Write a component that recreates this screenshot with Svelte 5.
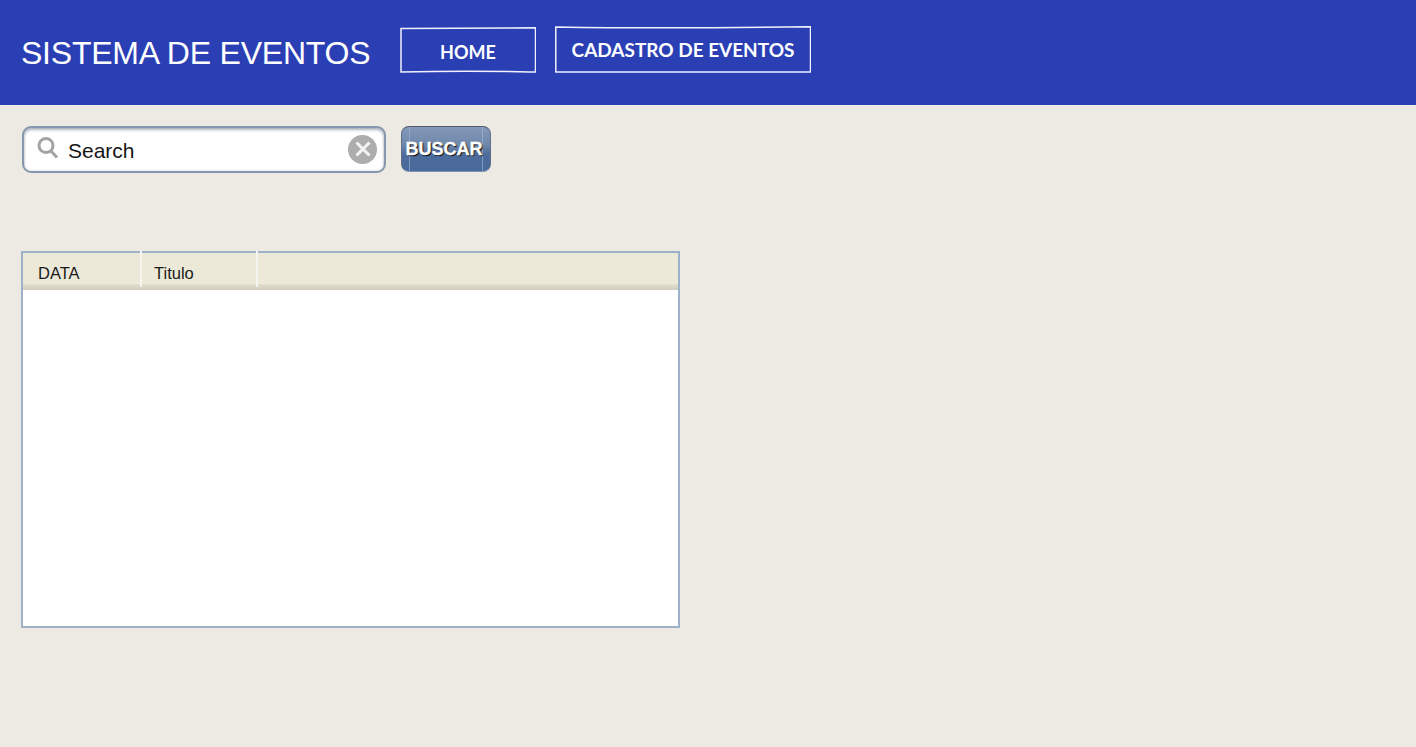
<script>
  const columns = [
    { label: 'DATA', cls: 'col-data' },
    { label: 'Titulo', cls: 'col-titulo' }
  ];
</script>

<div class="page">
  <header class="topbar">
    <h1 class="brand">SISTEMA DE EVENTOS</h1>
    <nav class="nav">
      <a class="nav-btn home" href="#home">
        <svg class="sketch" width="136" height="46" viewBox="0 0 136 46" aria-hidden="true">
          <path d="M1 1.5 L135.5 0.8 L135.5 45 C100 44.5 70 43.5 1 45 Z" />
        </svg>
        <span>HOME</span>
      </a>
      <a class="nav-btn cadastro" href="#cadastro">
        <svg class="sketch" width="256" height="47" viewBox="0 0 256 47" aria-hidden="true">
          <path d="M0.8 1 C90 2.5 170 2 255.5 0.7 L255.5 46 L0.8 46 Z" />
        </svg>
        <span>CADASTRO DE EVENTOS</span>
      </a>
    </nav>
  </header>

  <main class="content">
    <div class="toolbar">
      <div class="search">
        <svg class="search-icon" width="22" height="24" viewBox="0 0 22 24" aria-hidden="true">
          <circle cx="9" cy="9.5" r="7" />
          <path d="M14 15 L20 21.5" />
        </svg>
        <span class="search-text">Search</span>
        <span class="clear">
          <svg width="16" height="16" viewBox="0 0 16 16" aria-hidden="true">
            <path d="M1.5 1.5 L14.5 14.5 M14.5 1.5 L1.5 14.5" />
          </svg>
        </span>
      </div>
      <button class="buscar" type="button">
        <span class="buscar-label">BUSCAR</span>
      </button>
    </div>

    <section class="table">
      <div class="thead">
        {#each columns as c}
          <div class="th {c.cls}">{c.label}</div>
        {/each}
        <div class="th-fill"></div>
      </div>
      <div class="tbody"></div>
    </section>
  </main>
</div>

<style>
  :global(body) {
    margin: 0;
    background: #edeae3;
  }

  .page {
    min-height: 747px;
    background: #edeae3;
    font-family: "Liberation Sans", Arial, sans-serif;
  }

  .topbar {
    height: 105px;
    box-sizing: border-box;
    background: #2b3fb5;
    display: flex;
    align-items: flex-start;
    padding: 26px 0 0 21px;
  }

  .brand {
    margin: 9px 0 0;
    width: 379px;
    color: #fff;
    font-size: 32px;
    line-height: 37px;
    font-weight: 400;
    letter-spacing: -0.22px;
    white-space: nowrap;
  }

  .nav {
    display: flex;
    align-items: flex-end;
    gap: 19px;
    height: 47px;
  }

  .nav-btn {
    position: relative;
    display: flex;
    justify-content: center;
    color: #fff;
    text-decoration: none;
    font-family: "Lato", "DejaVu Sans", sans-serif;
    font-weight: 700;
    line-height: 24px;
    box-sizing: border-box;
  }

  .home {
    width: 136px;
    height: 46px;
    padding-top: 13px;
    font-size: 18px;
  }

  .cadastro {
    width: 256px;
    height: 47px;
    padding-top: 12px;
    font-size: 19px;
    letter-spacing: -0.02px;
  }

  .sketch {
    position: absolute;
    left: 0;
    top: 0;
  }

  .sketch path {
    fill: none;
    stroke: #f0f1fa;
    stroke-width: 1.5;
  }

  .content {
    padding: 21px 0 0 21px;
  }

  .toolbar {
    display: flex;
    align-items: flex-start;
    gap: 15px;
    margin-left: 1px;
  }

  .search {
    width: 364px;
    height: 47px;
    box-sizing: border-box;
    border: 2px solid #8598b0;
    border-radius: 9px;
    background: #fff;
    box-shadow: inset 0 2px 3px rgba(110, 120, 135, 0.55), inset 0 0 2px rgba(110, 120, 135, 0.3);
    display: flex;
    align-items: center;
    padding: 0 7px 0 13px;
  }

  .search-icon {
    flex: none;
    margin-top: -4px;
  }

  .search-icon circle,
  .search-icon path {
    fill: none;
    stroke: #a3a3a3;
    stroke-width: 3;
  }

  .search-text {
    margin-left: 9px;
    margin-top: 3px;
    flex: 1;
    font-size: 21px;
    color: #151515;
  }

  .clear {
    width: 29px;
    height: 29px;
    margin-top: -1px;
    border-radius: 50%;
    background: #adadad;
    display: flex;
    align-items: center;
    justify-content: center;
  }

  .clear path {
    fill: none;
    stroke: #f4f4f4;
    stroke-width: 3;
  }

  .buscar {
    position: relative;
    width: 90px;
    height: 46px;
    box-sizing: border-box;
    padding: 0 4px 1px 0;
    border: 1px solid #5f6f88;
    border-top-color: #555b66;
    border-bottom-color: #7f93b0;
    border-radius: 8px;
    background: linear-gradient(#8399ba 0%, #7088aa 40%, #4d6c9c 62%, #48699b 100%);
    color: #fff;
    font-family: "Liberation Sans", Arial, sans-serif;
    font-weight: 700;
    font-size: 18px;
    line-height: 20px;
    -webkit-text-stroke: 0.3px #fff;
    text-shadow: 1px 1px 1px #000;
  }

  .buscar::before,
  .buscar::after {
    content: "";
    position: absolute;
    top: 0;
    bottom: 0;
    width: 1px;
    background: rgba(170, 190, 220, 0.55);
  }

  .buscar::before {
    left: 7px;
  }

  .buscar::after {
    right: 7px;
  }

  .buscar-label {
    position: relative;
    z-index: 1;
  }

  .table {
    margin-top: 78px;
    width: 659px;
    height: 377px;
    box-sizing: border-box;
    border: 2px solid #9db2c8;
    background: #fff;
    display: flex;
    flex-direction: column;
  }

  .thead {
    display: flex;
    align-items: flex-start;
    height: 37px;
    flex: none;
    box-sizing: border-box;
    background: linear-gradient(#ece9d9 0%, #ece9d9 82%, #dcd9ca 88%, #d0cdbf 100%);
  }

  .th {
    box-sizing: border-box;
    margin-top: -2px;
    height: 36px;
    font-size: 16.5px;
    line-height: 18px;
    color: #1a1a1a;
    padding-top: 13px;
    border-right: 2px solid #f6f6f0;
  }

  .col-data {
    width: 119px;
    padding-left: 15px;
  }

  .col-titulo {
    width: 116px;
    padding-left: 12px;
  }

  .th-fill {
    flex: 1;
  }

  .tbody {
    flex: 1;
    background: #fff;
  }
</style>
